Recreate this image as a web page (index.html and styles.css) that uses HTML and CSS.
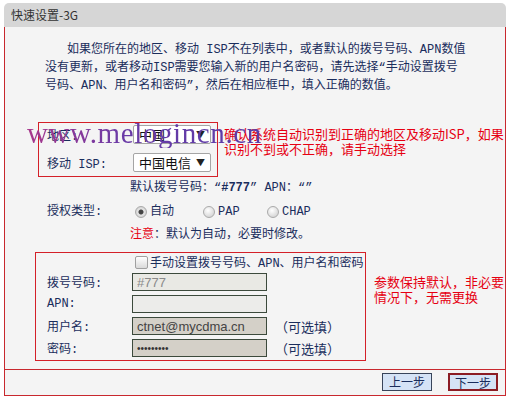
FILE: index.html
```html
<!DOCTYPE html>
<html lang="zh-CN">
<head>
    <meta charset="UTF-8">
    <meta name="viewport" content="width=device-width, initial-scale=1.0">
    <title>快速设置-3G</title>
    <link rel="stylesheet" href="styles.css">
</head>
<body>
    <div class="page">
        <div class="title">快速设置-3G</div>

        <div class="panel">
            <p class="intro">如果您所在的地区、移动 ISP不在列表中，或者默认的拨号号码、APN数值<br>没有更新，或者移动ISP需要您输入新的用户名密码，请先选择“手动设置拨号<br>号码、APN、用户名和密码”，然后在相应框中，填入正确的数值。</p>

            <div class="group group-isp">
                <div class="box box-isp">
                    <div class="row">
                        <span class="label">地区:</span>
                        <div class="select"><span>中国</span><span class="arrow">▼</span></div>
                    </div>
                    <div class="row">
                        <span class="label">移动 ISP:</span>
                        <div class="select"><span>中国电信</span><span class="arrow">▼</span></div>
                    </div>
                </div>
                <p class="note note-isp">确认系统自动识别到正确的地区及移动ISP，如果<br>识别不到或不正确，请手动选择</p>
            </div>

            <div class="line indent">默认拨号号码：“<b>#777</b>” APN：“”</div>

            <div class="line auth">
                <span class="label">授权类型:</span>
                <span class="option opt-auto"><span class="radio checked"></span>自动</span>
                <span class="option opt-pap"><span class="radio"></span>PAP</span>
                <span class="option"><span class="radio"></span>CHAP</span>
            </div>

            <div class="line indent tip"><span class="warn">注意</span>：默认为自动，必要时修改。</div>

            <div class="group group-manual">
                <div class="box box-manual">
                    <div class="check-row"><span class="checkbox"></span>手动设置拨号号码、APN、用户名和密码</div>
                    <div class="field">
                        <span class="label">拨号号码:</span>
                        <input class="input input-dial" type="text" value="#777" disabled>
                    </div>
                    <div class="field">
                        <span class="label">APN:</span>
                        <input class="input input-apn" type="text" value="" disabled>
                    </div>
                    <div class="field">
                        <span class="label">用户名:</span>
                        <input class="input input-grey" type="text" value="ctnet@mycdma.cn" disabled>
                        <span class="optional">（可选填）</span>
                    </div>
                    <div class="field">
                        <span class="label">密码:</span>
                        <input class="input input-grey input-pass" type="password" value="ctnet1234" disabled>
                        <span class="optional">（可选填）</span>
                    </div>
                </div>
                <p class="note note-keep">参数保持默认，非必要<br>情况下，无需更换</p>
            </div>
        </div>

        <div class="buttons">
            <button class="btn">上一步</button>
            <button class="btn btn-next">下一步</button>
        </div>

        <div class="watermark">www.melogincn.cn</div>
    </div>
</body>
</html>
```

FILE: styles.css
```css
body {
    margin: 0;
    background: #fff;
    font-family: "Liberation Mono", "Noto Sans CJK SC", monospace;
    font-size: 12px;
    color: #1a2d5c;
}
.page {
    position: relative;
    width: 502px;
    margin: 3px 0 0 4px;
}
.title {
    height: 24px;
    line-height: 24px;
    padding-left: 7px;
    background: #d6d6d6;
    border-radius: 5px 5px 0 0;
    color: #333;
    font-family: "Noto Sans CJK SC", sans-serif;
}
.panel {
    background: #f4f4f4;
    border-left: 1px solid #c8282e;
    border-right: 1px solid #c8282e;
    padding-bottom: 8px;
}
.intro {
    margin: 0;
    padding: 14px 0 0 40px;
    line-height: 18px;
    text-indent: 22px;
    white-space: nowrap;
}
.group {
    display: flex;
    align-items: flex-start;
}
.group-isp {
    margin-top: 27px;
    padding-left: 33px;
}
.group-manual {
    margin-top: 8px;
    padding-left: 30px;
}
.box {
    box-sizing: border-box;
    border: 1px solid #d42028;
}
.box-isp {
    width: 180px;
    padding: 2px 0 4px 8px;
    display: flex;
    flex-direction: column;
    gap: 9px;
}
.box-manual {
    width: 331px;
    padding: 0 0 1px 11px;
}
.row {
    display: flex;
    align-items: center;
    height: 19px;
}
.label {
    width: 86px;
    flex-shrink: 0;
}
.select {
    box-sizing: border-box;
    width: 78px;
    height: 19px;
    display: flex;
    align-items: center;
    justify-content: space-between;
    padding: 0 5px;
    background: #fff;
    border: 1px solid #a5a5a5;
    border-radius: 2px;
    font-family: "Noto Sans CJK SC", sans-serif;
    font-size: 13px;
    color: #111;
}
.arrow {
    font-size: 9px;
    color: #222;
}
.note {
    margin: 0;
    color: #e60012;
    font-family: "Noto Sans CJK SC", sans-serif;
    font-size: 13px;
    line-height: 15px;
    white-space: nowrap;
}
.note-isp {
    margin: 4px 0 0 6px;
}
.note-keep {
    margin: 22px 0 0 8px;
}
.line {
    line-height: 18px;
    white-space: nowrap;
}
.indent {
    margin-top: 2px;
    padding-left: 125px;
}
.tip {
    margin-top: 5px;
}
.warn {
    color: #e60012;
}
.auth {
    display: flex;
    align-items: center;
    margin-top: 6px;
    padding-left: 42px;
}
.auth .label {
    width: 88px;
}
.option {
    display: inline-flex;
    align-items: center;
    gap: 3px;
}
.opt-auto {
    width: 68px;
}
.opt-pap {
    width: 64px;
}
.radio {
    box-sizing: border-box;
    width: 12px;
    height: 12px;
    border-radius: 50%;
    border: 1px solid #aaa;
    background: radial-gradient(circle at 40% 35%, #fff, #c9c9c9);
}
.radio.checked {
    background: radial-gradient(circle, #444 0 2px, #e6e6e6 3px, #c2c2c2 100%);
}
.check-row {
    display: flex;
    align-items: center;
    height: 18px;
    padding-left: 88px;
    gap: 2px;
}
.checkbox {
    box-sizing: border-box;
    width: 13px;
    height: 13px;
    border: 1px solid #a0a0a0;
    border-radius: 2px;
    background: linear-gradient(#fff, #dadada);
}
.field {
    display: flex;
    align-items: center;
    height: 22px;
}
.field .label {
    width: 85px;
}
.input {
    box-sizing: border-box;
    width: 135px;
    height: 18px;
    margin: 0;
    padding: 0 4px;
    border: 1px solid #3c4a3c;
    font-family: "Liberation Sans", sans-serif;
    font-size: 13px;
    color: #444;
}
.input-dial {
    background: #e9e9e4;
    color: #8a8a8a;
}
.input-apn {
    background: #ececea;
}
.input-grey {
    background: #d4d0c8;
}
.input-pass {
    font-size: 10px;
    color: #333;
}
.optional {
    margin-left: 8px;
    font-family: "Noto Sans CJK SC", sans-serif;
    font-size: 13px;
}
.buttons {
    display: flex;
    justify-content: flex-end;
    gap: 16px;
    padding: 3px 7px 4px;
    background: #f4f4f4;
    border: 1px solid #c8282e;
}
.btn {
    box-sizing: border-box;
    width: 50px;
    height: 18px;
    padding: 0;
    background: #d5e3f6;
    border: 1px solid #38445a;
    font-family: "Noto Sans CJK SC", sans-serif;
    font-size: 12px;
    line-height: 16px;
    color: #1a2d5c;
}
.btn-next {
    border: 2px solid #8c1c24;
}
.watermark {
    position: absolute;
    left: 23px;
    top: 116px;
    font-family: "Liberation Serif", serif;
    font-size: 29px;
    line-height: 29px;
    letter-spacing: 0.6px;
    white-space: nowrap;
    background: linear-gradient(90deg, #a8388c, #6a3aa6 40%, #5a3ca8);
    -webkit-background-clip: text;
    background-clip: text;
    color: transparent;
}
```
